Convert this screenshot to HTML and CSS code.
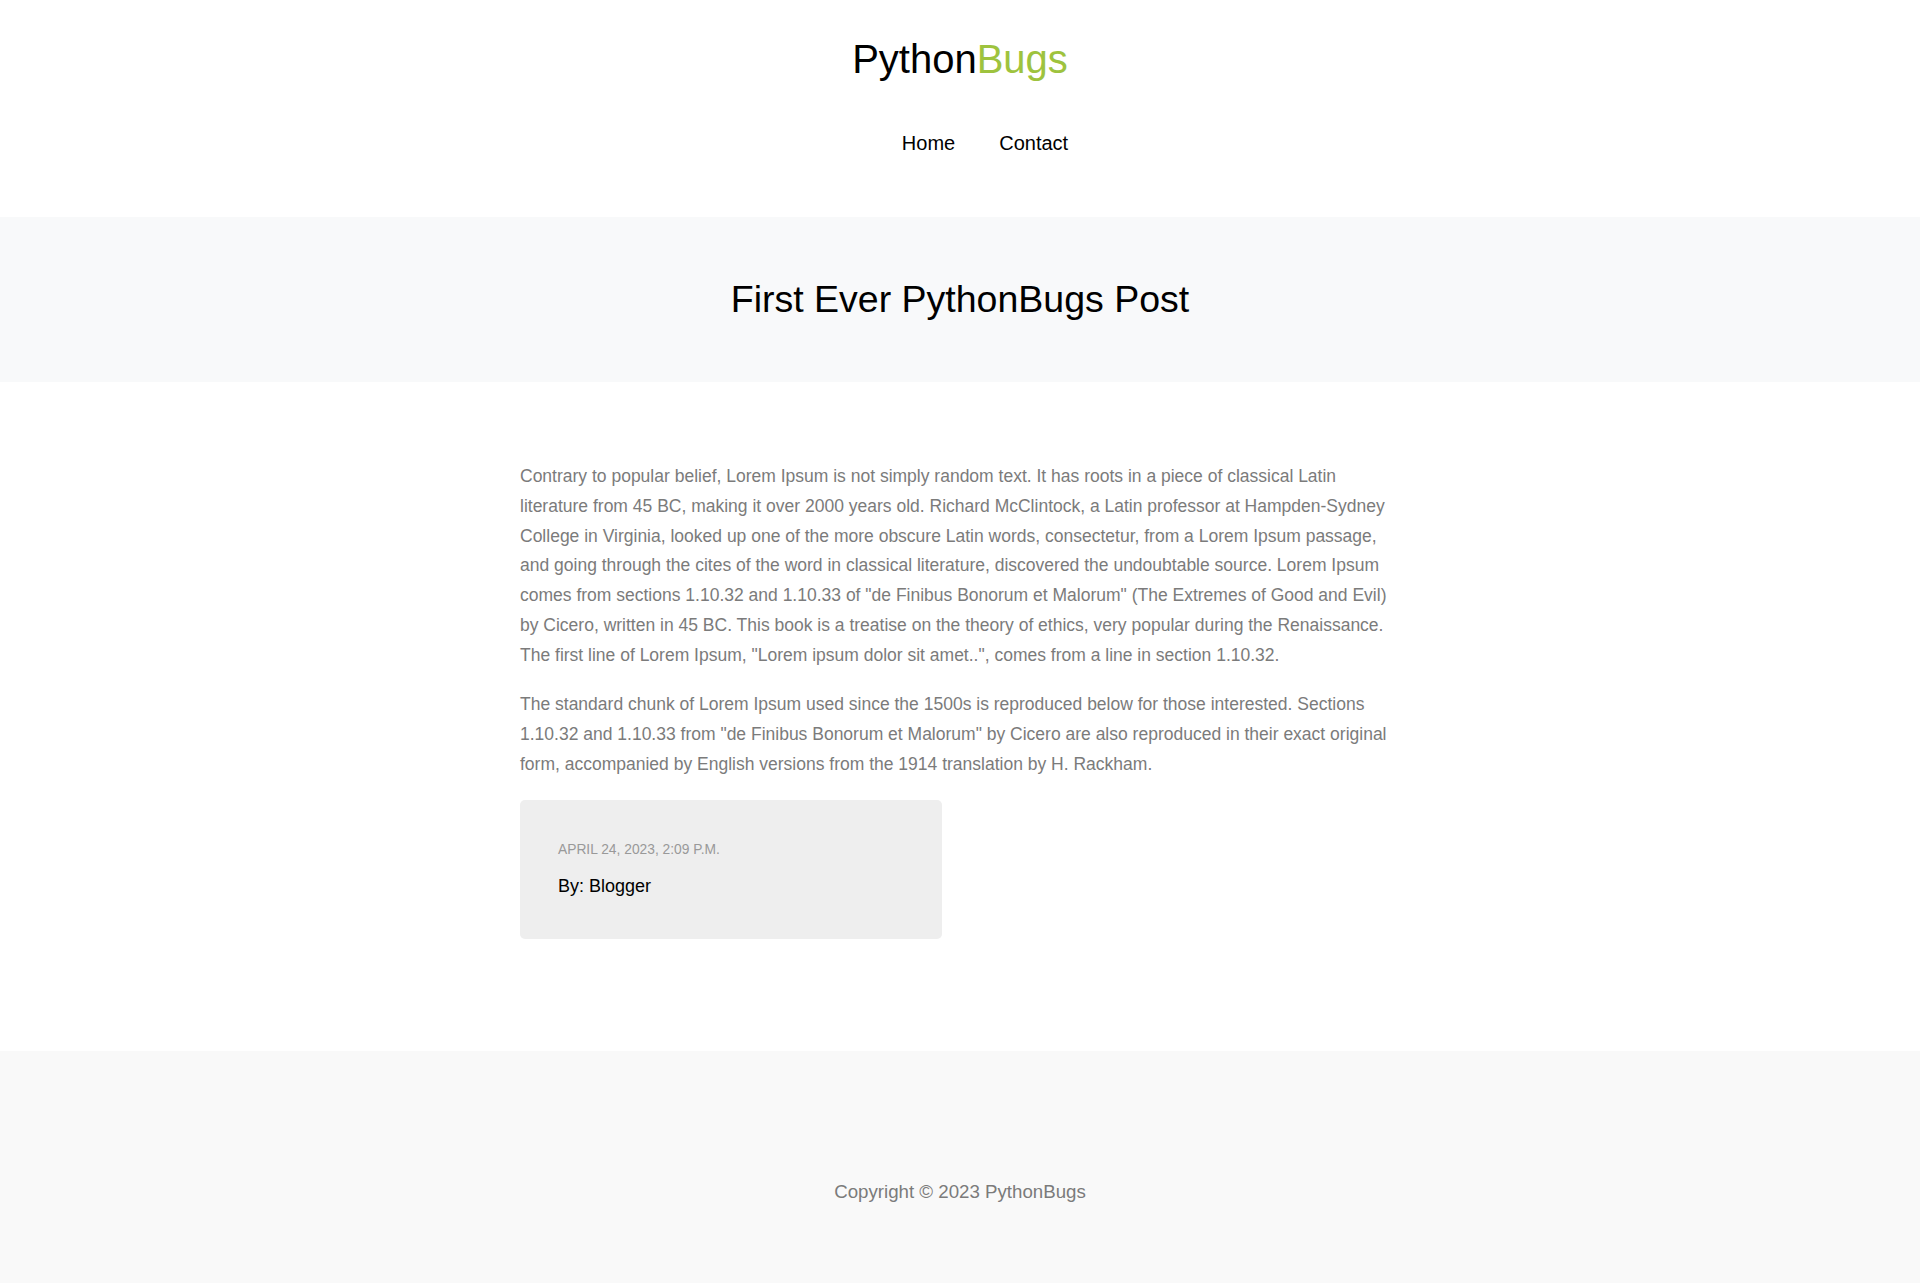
FILE: index.html
```html
<!DOCTYPE html>
<html lang="en">
<head>
<meta charset="utf-8">
<title>First Ever PythonBugs Post</title>
<link rel="stylesheet" href="styles.css">
</head>
<body>
<header class="site-header">
  <a class="brand" href="#">Python<span class="brand-accent">Bugs</span></a>
  <nav class="main-nav">
    <a href="#" class="nav-link">Home</a>
    <a href="#" class="nav-link">Contact</a>
  </nav>
</header>
<section class="hero">
  <h1 class="hero-title">First Ever PythonBugs Post</h1>
</section>
<main class="post">
  <div class="post-body">
    <p>Contrary to popular belief, Lorem Ipsum is not simply random text. It has roots in a piece of classical Latin literature from 45 BC, making it over 2000 years old. Richard McClintock, a Latin professor at Hampden-Sydney College in Virginia, looked up one of the more obscure Latin words, consectetur, from a Lorem Ipsum passage, and going through the cites of the word in classical literature, discovered the undoubtable source. Lorem Ipsum comes from sections 1.10.32 and 1.10.33 of "de Finibus Bonorum et Malorum" (The Extremes of Good and Evil) by Cicero, written in 45 BC. This book is a treatise on the theory of ethics, very popular during the Renaissance. The first line of Lorem Ipsum, "Lorem ipsum dolor sit amet..", comes from a line in section 1.10.32.</p>
    <p>The standard chunk of Lorem Ipsum used since the 1500s is reproduced below for those interested. Sections 1.10.32 and 1.10.33 from "de Finibus Bonorum et Malorum" by Cicero are also reproduced in their exact original form, accompanied by English versions from the 1914 translation by H. Rackham.</p>
    <div class="post-meta">
      <div class="post-date">APRIL 24, 2023, 2:09 P.M.</div>
      <div class="post-author">By: Blogger</div>
    </div>
  </div>
</main>
<footer class="site-footer">
  <p class="copyright">Copyright © 2023 PythonBugs</p>
</footer>
</body>
</html>
```
FILE: styles.css
```css
* { box-sizing: border-box; }
html, body {
  margin: 0;
  padding: 0;
}
body {
  font-family: "Liberation Sans", Arial, sans-serif;
  color: #000;
  background: #fff;
}
a { text-decoration: none; color: inherit; }

.site-header {
  display: flex;
  flex-direction: column;
  align-items: center;
  padding: 36px 0 0;
  height: 217px;
}
.brand {
  font-size: 40px;
  line-height: 46px;
  color: #000;
}
.brand-accent { color: #9ec33e; }

.main-nav {
  display: flex;
  gap: 44px;
  margin-top: 50px;
  padding-left: 50px;
}
.nav-link {
  font-size: 20px;
  line-height: 23px;
  color: #000;
}

.hero {
  background: #f8f9fa;
  height: 165px;
  display: flex;
  align-items: center;
  justify-content: center;
  padding-bottom: 2px;
}
.hero-title {
  margin: 0;
  font-weight: 400;
  font-size: 37.5px;
  line-height: 44px;
}

.post {
  height: 669px;
  padding-top: 80px;
}
.post-body {
  width: 880px;
  margin-left: 520px;
}
.post-body p {
  margin: 0 0 20px;
  font-size: 17.5px;
  line-height: 29.75px;
  color: #7b7b7b;
}
.post-meta {
  width: 422px;
  height: 139px;
  background: #eeeeee;
  border-radius: 5px;
  padding: 42.5px 38px 0;
}
.post-date {
  font-size: 13.8px;
  line-height: 16px;
  color: #999;
}
.post-author {
  margin-top: 17.5px;
  font-size: 18px;
  line-height: 21px;
  color: #000;
}

.site-footer {
  background: #f9f9f9;
  height: 232px;
  padding-top: 129.5px;
  text-align: center;
}
.copyright {
  margin: 0;
  font-size: 18.7px;
  line-height: 22px;
  color: #7b7b7b;
}
```
